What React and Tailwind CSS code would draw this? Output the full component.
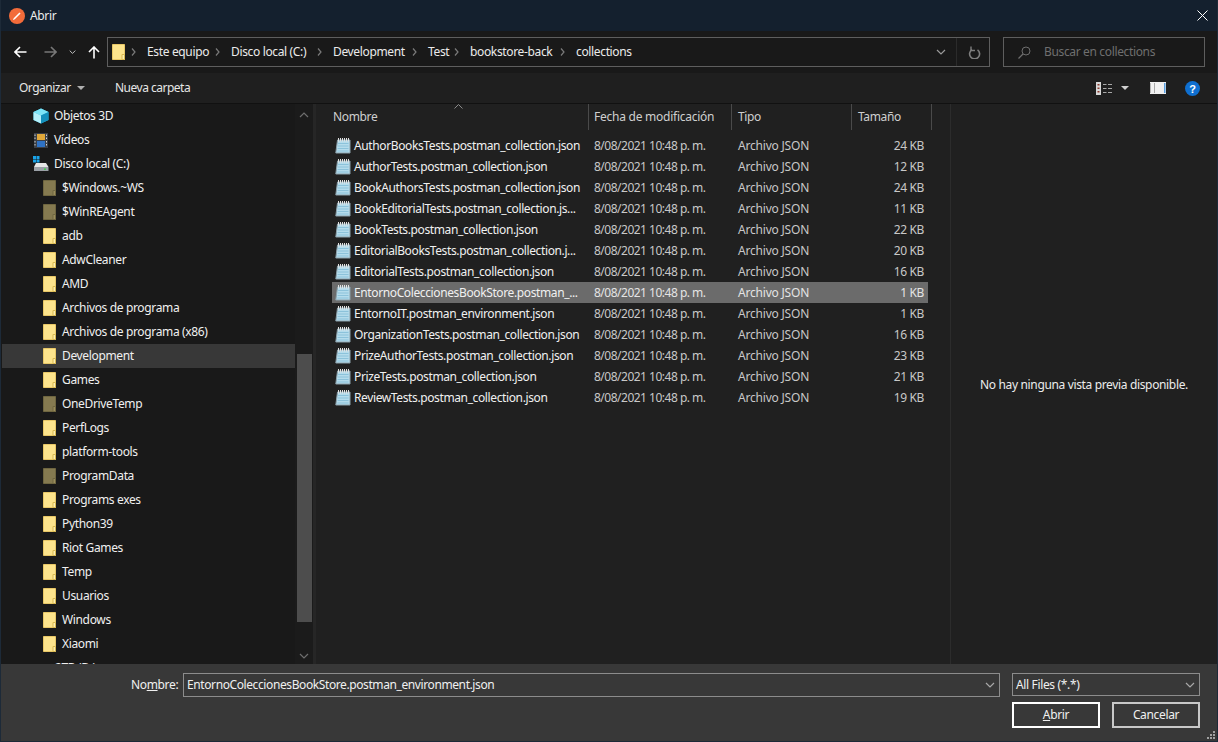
import React from "react";

const Folder = ({ dim, className = "" }) => (
  <svg width="13" height="16" viewBox="0 0 13 16" className={`shrink-0 ${className}`}>
    <path d="M0.5 0.5H12.5V15.5H0.5Z" fill={dim ? "#857a50" : "#fde48c"} stroke={dim ? "#6f6640" : "#e8c766"} strokeWidth="1" />
    <path d="M10 15.5V10.5H12.5V15.5Z" fill={dim ? "#9a8d5c" : "#fff0b0"} stroke={dim ? "#6f6640" : "#d9b850"} strokeWidth="1" />
  </svg>
);

const NoteIcon = () => (
  <svg width="16" height="16" viewBox="0 0 16 16" className="shrink-0">
    <path d="M2.5 2H15V15H0.8Z" fill="#b5dcec" stroke="#8aa0aa" strokeWidth="1" />
    <path d="M3.2 5.5H13.5M2.9 8H13.5M2.6 10.5H13.5M2.3 13H13.5" stroke="#8cc2da" strokeWidth="1" />
    <path d="M3.5 0V3.5M5.5 0V3.5M7.5 0V3.5M9.5 0V3.5M11.5 0V3.5M13.5 0V3.5" stroke="#e2e2e2" strokeWidth="1" />
  </svg>
);

const Cube = () => (
  <svg width="16" height="16" viewBox="0 0 16 16" className="shrink-0">
    <path d="M8 0.5L15.5 4V12L8 15.5L0.5 12V4Z" fill="#27b4dc" />
    <path d="M8 0.5L15.5 4L8 7.5L0.5 4Z" fill="#7ce4f6" />
    <path d="M8 7.5V15.5L0.5 12V4Z" fill="#b4f0fa" />
    <path d="M8 7.5V15.5L15.5 12V4Z" fill="#1490bc" />
  </svg>
);

const VideoIcon = () => (
  <svg width="14" height="15" viewBox="0 0 14 15" className="shrink-0">
    <rect x="0" y="0" width="14" height="15" fill="#3b4048" />
    <rect x="3" y="1" width="8" height="6" fill="#e0a83a" />
    <rect x="3" y="8" width="8" height="6" fill="#2f72c4" />
    <path d="M1 1.5V3M1 4.5V6M1 8V9.5M1 11V12.5M12.5 1.5V3M12.5 4.5V6M12.5 8V9.5M12.5 11V12.5" stroke="#d0d0d0" strokeWidth="1" />
  </svg>
);

const DriveIcon = () => (
  <svg width="16" height="16" viewBox="0 0 16 16" className="shrink-0">
    <rect x="0" y="0" width="3" height="3" fill="#19a3e8" />
    <rect x="3.5" y="0" width="3" height="3" fill="#19a3e8" />
    <rect x="0" y="3.5" width="3" height="3" fill="#19a3e8" />
    <rect x="3.5" y="3.5" width="3" height="3" fill="#19a3e8" />
    <path d="M3 7H13L15.5 11H1Z" fill="#e6e6e6" />
    <rect x="1" y="11" width="14.5" height="4" fill="#9aa0a6" />
    <rect x="11" y="12.5" width="2" height="1.5" fill="#3fd04a" />
  </svg>
);

const Chevron = ({ className = "", stroke = "#8a8a8a" }) => (
  <svg width="10" height="6" viewBox="0 0 10 6" className={className}>
    <path d="M1 1L5 5L9 1" fill="none" stroke={stroke} strokeWidth="1.2" />
  </svg>
);

const Sep = () => (
  <svg width="5" height="8" viewBox="0 0 5 8" className="shrink-0">
    <path d="M1 0.5L4 4L1 7.5" fill="none" stroke="#7a7a7a" strokeWidth="1.2" />
  </svg>
);

const tree = [
  ["$Windows.~WS", true], ["$WinREAgent", true], ["adb"], ["AdwCleaner"], ["AMD"],
  ["Archivos de programa"], ["Archivos de programa (x86)"], ["Development", false, true],
  ["Games"], ["OneDriveTemp", true], ["PerfLogs"], ["platform-tools"], ["ProgramData", true],
  ["Programs exes"], ["Python39"], ["Riot Games"], ["Temp"], ["Usuarios"], ["Windows"], ["Xiaomi"],
];

const files = [
  ["AuthorBooksTests.postman_collection.json", "24 KB"],
  ["AuthorTests.postman_collection.json", "12 KB"],
  ["BookAuthorsTests.postman_collection.json", "24 KB"],
  ["BookEditorialTests.postman_collection.js...", "11 KB"],
  ["BookTests.postman_collection.json", "22 KB"],
  ["EditorialBooksTests.postman_collection.j...", "20 KB"],
  ["EditorialTests.postman_collection.json", "16 KB"],
  ["EntornoColeccionesBookStore.postman_...", "1 KB", true],
  ["EntornoIT.postman_environment.json", "1 KB"],
  ["OrganizationTests.postman_collection.json", "16 KB"],
  ["PrizeAuthorTests.postman_collection.json", "23 KB"],
  ["PrizeTests.postman_collection.json", "21 KB"],
  ["ReviewTests.postman_collection.json", "19 KB"],
];

const crumbs = [
  ["Este equipo", "w-[59px]"],
  ["Disco local (C:)", "w-[77px]"],
  ["Development", "w-[70px]"],
  ["Test", "w-[17px]"],
  ["bookstore-back", "w-[81px]"],
  ["collections", "w-[60px]"],
];

export default function App() {
  return (
    <div className="w-[1218px] h-[742px] flex flex-col overflow-hidden bg-[#191919] text-[#f0f0f0] text-[12px] leading-[16px] tracking-[-0.35px] font-['Noto_Sans','Open_Sans',sans-serif] border-x border-b border-[#1d2a38]">
      {/* title bar */}
      <div className="h-[31px] shrink-0 bg-[#14202e] flex items-center pl-[8px] pr-[9px]">
        <svg width="16" height="16" viewBox="0 0 16 16" className="shrink-0">
          <circle cx="8" cy="8" r="8" fill="#f26b3a" />
          <path d="M5 11L11 5" stroke="#ffffff" strokeWidth="1.6" />
          <path d="M4 12L5.5 11.5L4.5 10.5Z" fill="#fff" />
        </svg>
        <span className="ml-[5px] text-[#ececec]">Abrir</span>
        <svg width="11" height="11" viewBox="0 0 11 11" className="ml-auto">
          <path d="M0.5 0.5L10.5 10.5M10.5 0.5L0.5 10.5" stroke="#ffffff" strokeWidth="1" />
        </svg>
      </div>

      {/* address row */}
      <div className="h-[42px] shrink-0 bg-[#191919] flex items-center">
        <div className="w-[106px] shrink-0 flex items-center pl-[13px]">
          <svg width="13" height="12" viewBox="0 0 13 12">
            <path d="M12.5 6H1.5M6 1L1 6L6 11" fill="none" stroke="#ffffff" strokeWidth="1.6" />
          </svg>
          <svg width="13" height="12" viewBox="0 0 13 12" className="ml-[17px]">
            <path d="M0.5 6H11.5M7 1L12 6L7 11" fill="none" stroke="#777777" strokeWidth="1.6" />
          </svg>
          <Chevron className="ml-[12px] w-[7px]" stroke="#e0e0e0" />
          <svg width="12" height="13" viewBox="0 0 12 13" className="ml-[12px]">
            <path d="M6 12.5V1.5M1 6L6 1L11 6" fill="none" stroke="#ffffff" strokeWidth="1.6" />
          </svg>
        </div>
        <div className="w-[883px] h-[30px] shrink-0 border border-[#5e5e5e] flex items-center pl-[4px]">
          <Folder />
          <div className="flex items-center ml-[6px] gap-[9px]">
            {crumbs.map(([c, w]) => (
              <React.Fragment key={c}>
                <Sep />
                <span className={`${w} text-[#ebebeb] whitespace-nowrap ml-[2px]`}>{c}</span>
              </React.Fragment>
            ))}
          </div>
          <Chevron className="ml-auto mr-[10px]" stroke="#9a9a9a" />
          <div className="w-[33px] h-full border-l border-[#2b2b2b] flex items-center justify-center pl-[3px]">
            <svg width="13" height="13" viewBox="0 0 13 13">
              <path d="M9.5 2.8A5 5 0 1 1 4 2.6" fill="none" stroke="#7e7e7e" strokeWidth="1.6" transform="translate(0,1)" />
              <path d="M3 0.5V4.5H7" fill="none" stroke="#7e7e7e" strokeWidth="1.4" />
            </svg>
          </div>
        </div>
        <div className="ml-[13px] w-[202px] h-[30px] shrink-0 border border-[#5e5e5e] flex items-center pl-[14px]">
          <svg width="13" height="13" viewBox="0 0 13 13" className="shrink-0">
            <circle cx="8" cy="5" r="4" fill="none" stroke="#6e6e6e" strokeWidth="1" />
            <path d="M5 8L0.5 12.5" stroke="#6e6e6e" strokeWidth="1.2" />
          </svg>
          <span className="ml-[13px] text-[#6f6f6f]">Buscar en collections</span>
        </div>
      </div>

      {/* toolbar */}
      <div className="h-[31px] shrink-0 bg-[#1f1f1f] border-b border-[#111111] flex items-center">
        <span className="ml-[18px] w-[52px] whitespace-nowrap tracking-[-0.5px] text-[#e6e6e6]">Organizar</span>
        <svg width="8" height="4" viewBox="0 0 8 4" className="ml-[6px]"><path d="M0 0H8L4 4Z" fill="#b0b0b0" /></svg>
        <span className="ml-[30px] tracking-[-0.5px] text-[#e6e6e6]">Nueva carpeta</span>
        <div className="ml-auto flex items-center mr-[17px]">
          <svg width="16" height="13" viewBox="0 0 16 13">
            <rect x="0" y="0" width="5" height="13" fill="#d8d8d8" />
            <rect x="1.5" y="2" width="2" height="1.5" fill="#8a3b2e" />
            <rect x="1.5" y="5.5" width="2" height="1.5" fill="#8a3b2e" />
            <rect x="1.5" y="9" width="2" height="1.5" fill="#8a3b2e" />
            <path d="M7 2.5H10.5M12 2.5H16M7 6.5H10.5M12 6.5H16M7 10.5H10.5M12 10.5H16" stroke="#a8a8a8" strokeWidth="1" />
          </svg>
          <svg width="8" height="4" viewBox="0 0 8 4" className="ml-[9px]"><path d="M0 0H8L4 4Z" fill="#d0d0d0" /></svg>
          <svg width="16" height="12" viewBox="0 0 16 12" className="ml-[21px]">
            <rect width="16" height="12" fill="#f0f0f0" />
            <rect x="0" y="1" width="1" height="10" fill="#b8b8b8" />
            <rect x="4" y="1" width="1" height="10" fill="#a8a8a8" />
            <rect x="14" y="1" width="1.5" height="10" fill="#5aa0e0" />
          </svg>
          <svg width="15" height="15" viewBox="0 0 15 15" className="ml-[19px]">
            <circle cx="7.5" cy="7.5" r="7.5" fill="#0f6fd0" />
            <text x="7.5" y="11.5" textAnchor="middle" fontSize="11" fontWeight="700" fill="#ffffff" fontFamily="Liberation Sans">?</text>
          </svg>
        </div>
      </div>

      {/* main */}
      <div className="flex-1 min-h-0 flex">
        {/* nav pane */}
        <div className="w-[312px] shrink-0 flex bg-[#191919] overflow-hidden">
          <div className="w-[294px] shrink-0 overflow-hidden pl-[1px]">
            {[["Objetos 3D", <Cube key="c" />], ["Vídeos", <VideoIcon key="v" />], ["Disco local (C:)", <DriveIcon key="d" />]].map(([t, ic]) => (
              <div key={t} className="h-[24px] flex items-center pl-[31px] gap-[5px]">
                <span className="w-[16px] flex justify-center">{ic}</span>
                <span className="whitespace-nowrap">{t}</span>
              </div>
            ))}
            {tree.map(([t, dim, sel]) => (
              <div key={t} className={`h-[24px] flex items-center pl-[41px] gap-[6px] ${sel ? "bg-[#383838]" : ""}`}>
                <Folder dim={dim} />
                <span className="whitespace-nowrap">{t}</span>
              </div>
            ))}
            <div className="h-[24px] flex items-center pl-[53px]"><span>2TB (D:)</span></div>
          </div>
          <div className="w-[18px] shrink-0 flex flex-col items-center bg-[#1b1b1b]">
            <Chevron className="mt-[8px] rotate-180" stroke="#6e6e6e" />
            <div className="mt-[236px] w-[15px] h-[268px] bg-[#4d4d4d]" />
            <Chevron className="mt-[31px]" stroke="#6e6e6e" />
          </div>
        </div>
        <div className="w-[3px] shrink-0 bg-[#262626]" />

        {/* file list */}
        <div className="w-[634px] shrink-0 bg-[#202020] flex flex-col pl-[16px]">
          <div className="h-[26px] shrink-0 flex text-[#cfcfcf] relative">
            <svg width="9" height="5" viewBox="0 0 9 5" className="absolute left-[122px] top-0">
              <path d="M0.5 4.5L4.5 0.5L8.5 4.5" fill="none" stroke="#8a8a8a" strokeWidth="1" />
            </svg>
            <div className="w-[257px] pl-[1px] flex items-center border-r border-[#4a4a4a]"><span>Nombre</span></div>
            <div className="w-[143px] pl-[5px] flex items-center border-r border-[#4a4a4a]"><span className="tracking-[-0.25px]">Fecha de modificación</span></div>
            <div className="w-[120px] pl-[6px] flex items-center border-r border-[#4a4a4a]"><span>Tipo</span></div>
            <div className="w-[80px] pl-[6px] flex items-center border-r border-[#4a4a4a]"><span>Tamaño</span></div>
          </div>
          <div className="mt-[5px] w-[596px]">
            {files.map(([n, s, sel]) => (
              <div key={n} className={`h-[21px] flex items-center ${sel ? "bg-[#6b6b6b] text-[#e4e4e4]" : "text-[#c8c8c8]"}`}>
                <div className="w-[257px] shrink-0 flex items-center pl-[3px] gap-[3px]">
                  <NoteIcon />
                  <span className="whitespace-nowrap tracking-[-0.38px] text-[#f0f0f0]">{n}</span>
                </div>
                <span className="w-[149px] shrink-0 pl-[5px] whitespace-nowrap tracking-[-0.5px]">8/08/2021 10:48 p. m.</span>
                <span className="w-[90px] shrink-0 whitespace-nowrap tracking-[-0.2px]">Archivo JSON</span>
                <span className="flex-1 text-right pr-[4px]">{s}</span>
              </div>
            ))}
          </div>
        </div>

        {/* preview */}
        <div className="flex-1 bg-[#202020] border-l border-[#2c2c2c] flex items-center justify-center pt-[1px]">
          <span className="text-[#ececec]">No hay ninguna vista previa disponible.</span>
        </div>
      </div>

      {/* footer */}
      <div className="h-[77px] shrink-0 bg-[#383838] pl-[130px] pr-[17px] pt-[9px] relative">
        <div className="flex items-start">
          <span className="w-[48px] h-[24px] flex items-center whitespace-nowrap">No<u>m</u>bre:</span>
          <div className="ml-[4px] w-[817px] h-[24px] border border-[#8c8c8c] flex items-center pl-[3px]">
            <span className="tracking-[-0.4px]">EntornoColeccionesBookStore.postman_environment.json</span>
            <Chevron className="ml-auto mr-[4px]" stroke="#a8a8a8" />
          </div>
          <div className="ml-[12px] w-[188px] h-[23px] border border-[#8c8c8c] flex items-center pl-[3px]">
            <span>All Files (*.*)</span>
            <Chevron className="ml-auto mr-[4px]" stroke="#a8a8a8" />
          </div>
        </div>
        <div className="mt-[5px] flex justify-end gap-[12px]">
          <button className="w-[88px] h-[26px] border-2 border-white flex items-center justify-center"><span><u>A</u>brir</span></button>
          <button className="w-[88px] h-[26px] border-2 border-[#c8c8c8] flex items-center justify-center">Cancelar</button>
        </div>
        <svg width="9" height="9" viewBox="0 0 9 9" className="absolute right-[1px] bottom-[1px]">
          <path d="M6 0h2v2H6zM3 3h2v2H3zM6 3h2v2H6zM0 6h2v2H0zM3 6h2v2H3zM6 6h2v2H6z" fill="#a0a0a0" />
        </svg>
      </div>
    </div>
  );
}
